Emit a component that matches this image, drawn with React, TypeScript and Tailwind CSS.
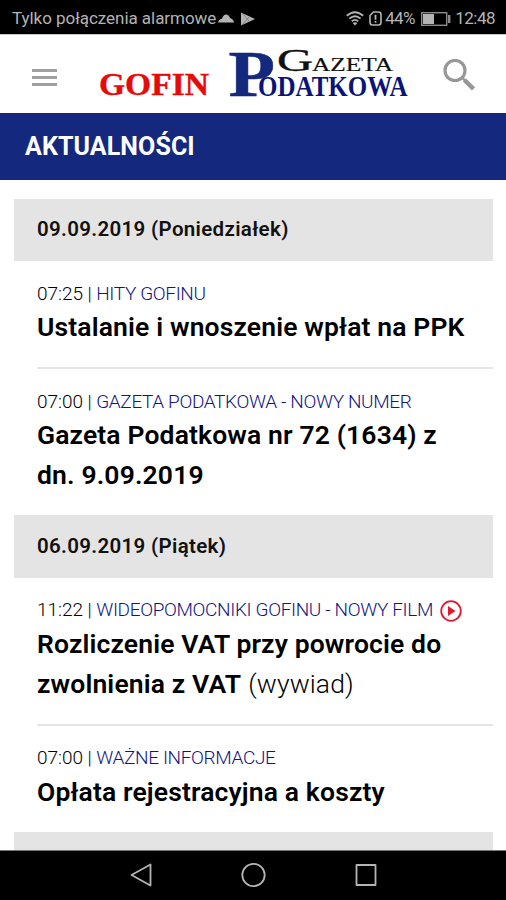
import React from 'react';

interface Article {
  time: string;
  category: string;
  title: string[];
  note?: string;
  video?: boolean;
}

interface Day {
  date: string;
  articles: Article[];
}

const days: Day[] = [
  {
    date: '09.09.2019 (Poniedziałek)',
    articles: [
      {
        time: '07:25',
        category: 'HITY GOFINU',
        title: ['Ustalanie i wnoszenie wpłat na PPK']
      },
      {
        time: '07:00',
        category: 'GAZETA PODATKOWA - NOWY NUMER',
        title: ['Gazeta Podatkowa nr 72 (1634) z', 'dn. 9.09.2019']
      }
    ]
  },
  {
    date: '06.09.2019 (Piątek)',
    articles: [
      {
        time: '11:22',
        category: 'WIDEOPOMOCNIKI GOFINU - NOWY FILM',
        title: ['Rozliczenie VAT przy powrocie do', 'zwolnienia z VAT'],
        note: '(wywiad)',
        video: true
      },
      {
        time: '07:00',
        category: 'WAŻNE INFORMACJE',
        title: ['Opłata rejestracyjna a koszty']
      }
    ]
  }
];

const StatusBar: React.FC = () => (
  <div className="flex h-[34px] shrink-0 items-center bg-black pl-3 pr-[11px] pt-[3px] text-[17px] text-[#b4b4b4]">
    <span className="whitespace-nowrap tracking-[-0.04px]">Tylko połączenia alarmowe</span>
    <svg className="ml-[2px] h-[9px] w-4 shrink-0" viewBox="0 0 16 9" fill="currentColor">
      <path d="M0 8.500 Q0.500 5.500 4 4.500 Q5.500 0.500 8 0.500 Q11 0.500 12 4 Q15.500 5 16 8.500 Z" />
    </svg>
    <svg className="ml-[7px] h-[14px] w-[14px] shrink-0" viewBox="0 0 14 14" fill="currentColor">
      <path d="M0 0.500 L14 7 L0 13.500 Z" />
      <path d="M1 1 L9 10 M1 13 L9 4" stroke="#777" strokeWidth="0.800" />
    </svg>
    <div className="ml-auto flex items-center">
      <svg className="h-[15px] w-[18px]" viewBox="0 0 18 15" fill="none" stroke="currentColor" strokeWidth="1.8">
        <path d="M0.8 4.8 Q9 -2.4 17.2 4.8" />
        <path d="M3.4 7.6 Q9 2.8 14.6 7.6" />
        <path d="M5.8 10.2 Q9 7.6 12.2 10.2" />
        <path d="M9 14.6 L6.6 12 Q9 10.4 11.4 12 Z" fill="currentColor" stroke="none" />
      </svg>
      <svg className="ml-[5px] h-[15px] w-[13px]" viewBox="0 0 13 15" fill="none" stroke="currentColor" strokeWidth="1.6">
        <path d="M4.500 1 H9.500 Q12 1 12 3.500 V11.500 Q12 14 9.500 14 H3.500 Q1 14 1 11.500 V4.500 Z" />
        <path d="M6.500 3.800 V8.800 M6.500 10 V11.800" strokeWidth="1.8" />
      </svg>
      <span className="ml-[3px] w-[31px] whitespace-nowrap tracking-[-0.6px]">44%</span>
      <svg className="ml-[5px] h-[14px] w-[30px]" viewBox="0 0 30 14">
        <rect x="0.7" y="0.7" width="25" height="12.600" fill="none" stroke="#8c8c8c" strokeWidth="1.4" />
        <rect x="2" y="2" width="11" height="10" fill="#b4b4b4" />
        <rect x="27" y="3" width="2.400" height="8" fill="#8c8c8c" />
      </svg>
      <span className="ml-[4px] whitespace-nowrap tracking-[-0.5px]">12:48</span>
    </div>
  </div>
);

const Header: React.FC = () => (
  <header className="flex h-[79px] shrink-0 items-center border-t border-[#c8c8c8] bg-white pl-8">
    <button type="button" aria-label="Menu" className="mt-[7px] flex w-[25px] flex-col gap-[4px]">
      <span className="h-[3px] bg-[#a0a0a0]" />
      <span className="h-[3px] bg-[#a0a0a0]" />
      <span className="h-[3px] bg-[#a0a0a0]" />
    </button>
    <svg className="ml-[42px] h-[78px] w-[112px]" viewBox="0 0 112 78" fontFamily="'Liberation Serif', serif">
      <text x="0" y="60" fontSize="32" fontWeight="700" fill="#e60a0a" stroke="#e60a0a" strokeWidth="0.400" textLength="110" lengthAdjust="spacingAndGlyphs">GOFIN</text>
    </svg>
    <svg className="ml-[17px] h-[78px] w-[184px] overflow-visible" viewBox="0 0 184 78" fontFamily="'Liberation Serif', serif">
      <text x="0.500" y="60.500" fontSize="66" fontWeight="700" fill="#14287d" stroke="#14287d" strokeWidth="0.500" textLength="46.500" lengthAdjust="spacingAndGlyphs">P</text>
      <text x="49" y="35.500" fontSize="32" fill="#111" stroke="#111" strokeWidth="0.400" textLength="36" lengthAdjust="spacingAndGlyphs">G</text>
      <text x="84" y="35.500" fontSize="18.500" fill="#111" stroke="#111" strokeWidth="0.200" textLength="81" lengthAdjust="spacingAndGlyphs">AZETA</text>
      <text x="30" y="60.500" fontSize="29" fontWeight="700" fill="#0a1478" textLength="149.500" lengthAdjust="spacingAndGlyphs">ODATKOWA</text>
    </svg>
    <svg className="ml-[31px] mt-[2px] h-8 w-8" viewBox="0 0 32 32" fill="none" stroke="#979797">
      <circle cx="12" cy="11.500" r="10" strokeWidth="3.200" />
      <path d="M19 18.500 L22.500 22" strokeWidth="2.400" />
      <path d="M21.500 21 L30.500 30" strokeWidth="4.500" />
    </svg>
  </header>
);

const PlayBadge: React.FC = () => (
  <svg className="ml-[7.5px] h-[22px] w-[22px]" viewBox="0 0 22 22">
    <circle cx="11" cy="11" r="9.800" fill="none" stroke="#e0192d" strokeWidth="1.800" />
    <path d="M8 6 L15.500 11 L8 16 Z" fill="#e0192d" />
  </svg>
);

const ArticleRow: React.FC<{ article: Article; last: boolean }> = ({ article, last }) => (
  <article className="ml-[23px]">
    <div className="pb-5 pt-[19px]">
      <div className="flex h-7 items-center whitespace-pre text-[19px] font-light text-black">
        <span className="tracking-[-0.05px]">{article.time} | </span>
        <span className="tracking-[-0.36px] text-[#14147d]">{article.category}</span>
        {article.video && <PlayBadge />}
      </div>
      <h2 className="-mt-px whitespace-nowrap text-[26.5px] font-semibold leading-10 tracking-[0.14px] text-black">
        {article.title.map((line, index) => (
          <div key={line} className="flex gap-[7px]">
            <span>{line}</span>
            {article.note && index === article.title.length - 1 && <span className="font-light">{article.note}</span>}
          </div>
        ))}
      </h2>
    </div>
    {!last && <div className="h-[2px] bg-[#e6e6e6]" />}
  </article>
);

const NavBar: React.FC = () => (
  <nav className="flex h-[50px] shrink-0 items-center justify-center border-t border-[#777] bg-black">
    <svg className="mb-px h-[26px] w-[250px]" viewBox="0 0 250 26" fill="none" stroke="#b4b4b4" strokeWidth="1.800" strokeLinejoin="round">
      <path d="M22.500 2.500 V23.500 L3.500 13 Z" />
      <circle cx="125.500" cy="13" r="11.200" />
      <rect x="228.500" y="3" width="19" height="20" />
    </svg>
  </nav>
);

const App: React.FC = () => {
  return (
    <div className="flex h-[900px] w-[506px] flex-col overflow-hidden bg-white font-[Roboto,sans-serif]">
      <StatusBar />
      <Header />
      <div className="flex h-[67px] shrink-0 items-center bg-[#14287d] pl-[25px] text-[25px] font-bold tracking-[0.1px] text-white">
        AKTUALNOŚCI
      </div>
      <main className="min-h-0 flex-1 overflow-hidden pl-[14px] pr-[13px] pt-[18.8px]">
        {days.map((day) => (
          <section key={day.date}>
            <h3 className="flex h-[62.4px] items-center bg-[#e4e4e4] pb-px pl-[23px] text-[20.5px] font-semibold tracking-[0.33px] text-[#111]">
              {day.date}
            </h3>
            {day.articles.map((article, index) => (
              <ArticleRow key={article.category} article={article} last={index === day.articles.length - 1} />
            ))}
          </section>
        ))}
        <div className="h-[62px] bg-[#e4e4e4]" />
      </main>
      <NavBar />
    </div>
  );
};

export default App;
